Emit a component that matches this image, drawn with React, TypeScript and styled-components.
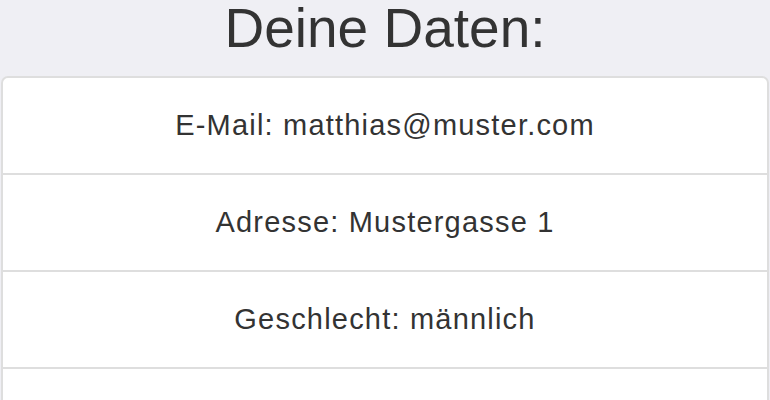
import React from 'react'
import styled, { createGlobalStyle } from 'styled-components'

const GlobalStyle = createGlobalStyle`
  html, body {
    margin: 0;
    padding: 0;
    background: #efeff4;
    font-family: "Liberation Sans", Arial, sans-serif;
    color: #333;
  }
`

const fields = [
  { label: 'E-Mail', value: 'matthias@muster.com' },
  { label: 'Adresse', value: 'Mustergasse 1' },
  { label: 'Geschlecht', value: 'männlich' },
]

export default function App() {
  return (
    <Page>
      <GlobalStyle />
      <Title>Deine Daten:</Title>
      <List>
        {fields.map((f) => (
          <Row key={f.label}>
            {f.label}: {f.value}
          </Row>
        ))}
        {/* next row continues below the fold */}
        <Row />
      </List>
    </Page>
  )
}

const Page = styled.div`
  width: 770px;
  height: 400px;
  overflow: hidden;
`

const Title = styled.h1`
  margin: 0;
  height: 76px;
  line-height: 56px;
  font-size: 55px;
  font-weight: normal;
  text-align: center;
  color: #333;
`

const List = styled.div`
  margin: 0 1px;
  background: #fff;
  border: 2px solid #dedede;
  border-radius: 7px;
  overflow: hidden;
`

const Row = styled.div`
  height: 95px;
  display: flex;
  align-items: center;
  justify-content: center;
  font-size: 29px;
  letter-spacing: 1.2px;
  color: #333;
  border-bottom: 2px solid #dedede;
`
